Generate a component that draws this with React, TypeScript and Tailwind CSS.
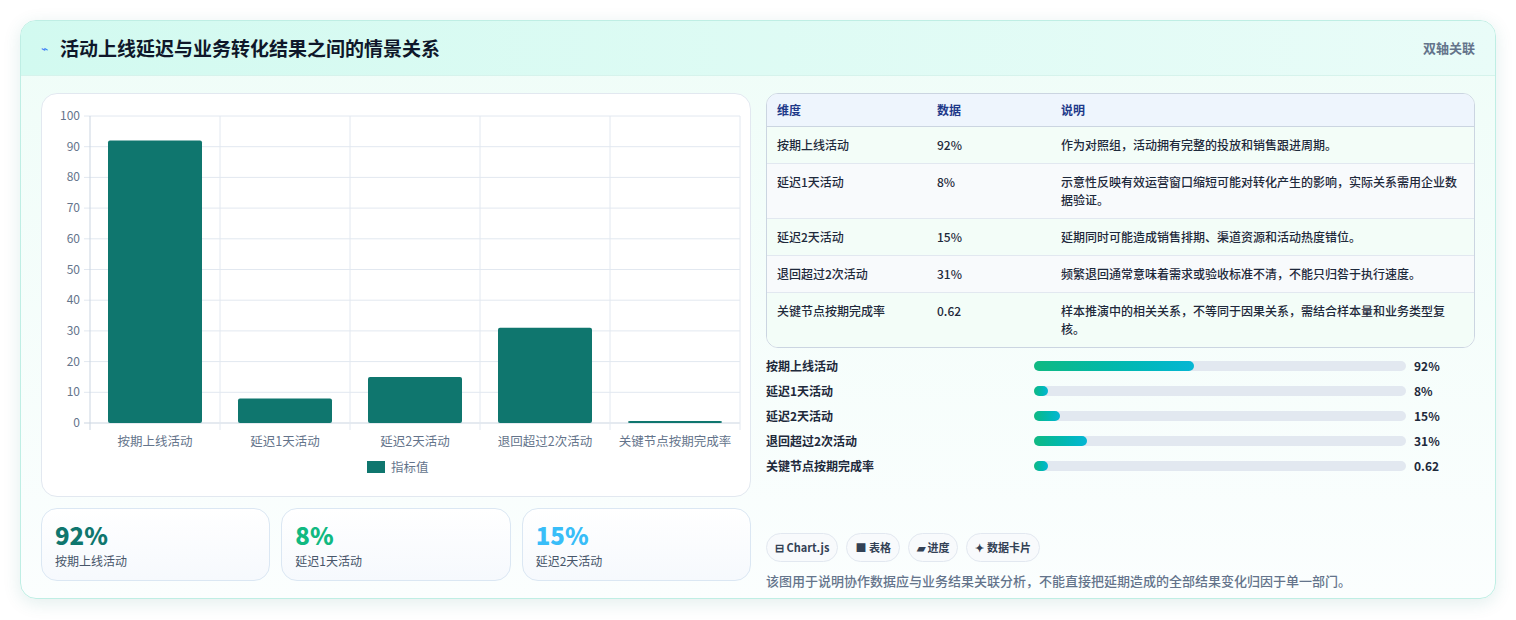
import React from 'react';

const cats = ['按期上线活动', '延迟1天活动', '延迟2天活动', '退回超过2次活动', '关键节点按期完成率'];
const vals = [92, 8, 15, 31, 0.62];
const rows = [
  ['按期上线活动', '92%', '作为对照组，活动拥有完整的投放和销售跟进周期。'],
  ['延迟1天活动', '8%', '示意性反映有效运营窗口缩短可能对转化产生的影响，实际关系需用企业数据验证。'],
  ['延迟2天活动', '15%', '延期同时可能造成销售排期、渠道资源和活动热度错位。'],
  ['退回超过2次活动', '31%', '频繁退回通常意味着需求或验收标准不清，不能只归咎于执行速度。'],
  ['关键节点按期完成率', '0.62', '样本推演中的相关关系，不等同于因果关系，需结合样本量和业务类型复核。'],
];
const fills = [160, 14, 26, 53, 14];

const Chart = () => {
  const x0 = 48, x1 = 698, y0 = 22, y1 = 329;
  const cw = (x1 - x0) / 5;
  const ys = (v: number) => y1 - ((y1 - y0) * v) / 100;
  return (
    <svg width="710" height="403" className="block">
      {[0, 10, 20, 30, 40, 50, 60, 70, 80, 90, 100].map((t) => (
        <g key={t}>
          <line x1={x0 - 6} x2={x1} y1={ys(t)} y2={ys(t)} stroke={t === 0 ? '#cbd5e1' : '#e2e8f0'} />
          <text x={x0 - 10} y={ys(t) + 4} textAnchor="end" fontSize="12" fill="#64748b">{t}</text>
        </g>
      ))}
      {[0, 1, 2, 3, 4, 5].map((i) => (
        <line key={i} x1={x0 + i * cw} x2={x0 + i * cw} y1={y0} y2={y1 + 7} stroke={i === 0 ? '#cbd5e1' : '#e2e8f0'} />
      ))}
      {vals.map((v, i) => (
        <rect key={i} x={x0 + i * cw + 18} y={ys(v)} width={94} height={Math.max(y1 - ys(v), 1.5)} rx="2" fill="#0f766e" />
      ))}
      {cats.map((c, i) => (
        <text key={c} x={x0 + i * cw + cw / 2} y={352} textAnchor="middle" fontSize="12.5" fill="#64748b">{c}</text>
      ))}
      <rect x="325" y="367" width="18" height="12" fill="#0f766e" />
      <text x="349" y="378" fontSize="12.5" fill="#64748b">指标值</text>
    </svg>
  );
};

export default function App() {
  return (
    <div className="w-[1516px] h-[620px] bg-white p-5" style={{ fontFamily: '"Noto Sans CJK SC", "Noto Sans", sans-serif' }}>
      <div className="w-[1476px] h-[579px] rounded-2xl border border-[#bfeee4] bg-gradient-to-b from-[#effdf8] to-[#fbfefe] shadow-[0_4px_18px_rgba(15,118,110,0.12)] overflow-hidden">
        <div className="h-[55px] flex items-center justify-between px-5 bg-gradient-to-r from-[#d2faf0] to-[#e9fcf8] border-b border-[#d6f3ec]">
          <div className="flex items-center gap-3">
            <span className="text-[#3b82f6] text-xs">⌁</span>
            <span className="text-[19px] font-bold text-[#0f172a]">活动上线延迟与业务转化结果之间的情景关系</span>
          </div>
          <span className="text-[13px] font-semibold text-[#64748b]">双轴关联</span>
        </div>
        <div className="flex gap-[15px] px-5 pt-[17px]">
          <div className="w-[710px] flex flex-col gap-[11px]">
            <div className="h-[404px] rounded-2xl border border-[#e2e8f0] bg-white">
              <Chart />
            </div>
            <div className="grid grid-cols-3 gap-[11px]">
              {[['92%', 'text-[#0f766e]', '按期上线活动'], ['8%', 'text-[#10b981]', '延迟1天活动'], ['15%', 'text-[#38bdf8]', '延迟2天活动']].map(([v, c, l]) => (
                <div key={l} className="h-[73px] rounded-2xl border border-[#dbe7f3] bg-gradient-to-b from-white to-[#f6f9fd] px-[13px] pt-[11px]">
                  <div className={`text-[24px] font-extrabold leading-[30px] ${c}`}>{v}</div>
                  <div className="text-[12px] text-[#475569] mt-[2px]">{l}</div>
                </div>
              ))}
            </div>
          </div>
          <div className="w-[711px] flex flex-col">
            <div className="rounded-xl border border-[#cbd5e1] overflow-hidden bg-white text-[12px]">
              <div className="flex h-[33px] items-center bg-[#eef5fd] border-b border-[#cbd5e1] font-semibold text-[#1e3a8a]">
                <div className="w-[170px] pl-[10px]">维度</div>
                <div className="w-[124px]">数据</div>
                <div className="flex-1">说明</div>
              </div>
              {rows.map((r, i) => (
                <div key={i} className={`flex py-[9px] border-b last:border-b-0 border-[#e2e8f0] text-[#1e293b] font-medium leading-[18px] ${i % 2 ? 'bg-[#f8fafc]' : 'bg-[#f3fdf8]'}`}>
                  <div className="w-[170px] pl-[10px]">{r[0]}</div>
                  <div className="w-[124px]">{r[1]}</div>
                  <div className="flex-1 pr-4">{r[2]}</div>
                </div>
              ))}
            </div>
            <div className="mt-[9px] flex flex-col gap-[7px]">
              {rows.map((r, i) => (
                <div key={i} className="flex items-center h-[18px] text-[12px] font-semibold text-[#1e293b]">
                  <div className="w-[268px]">{r[0]}</div>
                  <div className="w-[372px] h-[10px] rounded-full bg-[#e2e8f0]">
                    <div className="h-[10px] rounded-full bg-gradient-to-r from-[#10b981] to-[#06b6d4]" style={{ width: fills[i] }} />
                  </div>
                  <div className="ml-[8px] font-bold">{r[1]}</div>
                </div>
              ))}
            </div>
            <div className="mt-[58px] flex gap-[8px] text-[11px] font-semibold text-[#334155]">
              {['⊟ Chart.js', '■ 表格', '▰ 进度', '✦ 数据卡片'].map((c) => (
                <span key={c} className="h-[29px] px-[8px] flex items-center rounded-full border border-[#e2e8f0] bg-[#f8fafc]">{c}</span>
              ))}
            </div>
            <div className="mt-[9px] text-[13px] text-[#64748b] font-medium">该图用于说明协作数据应与业务结果关联分析，不能直接把延期造成的全部结果变化归因于单一部门。</div>
          </div>
        </div>
      </div>
    </div>
  );
}
